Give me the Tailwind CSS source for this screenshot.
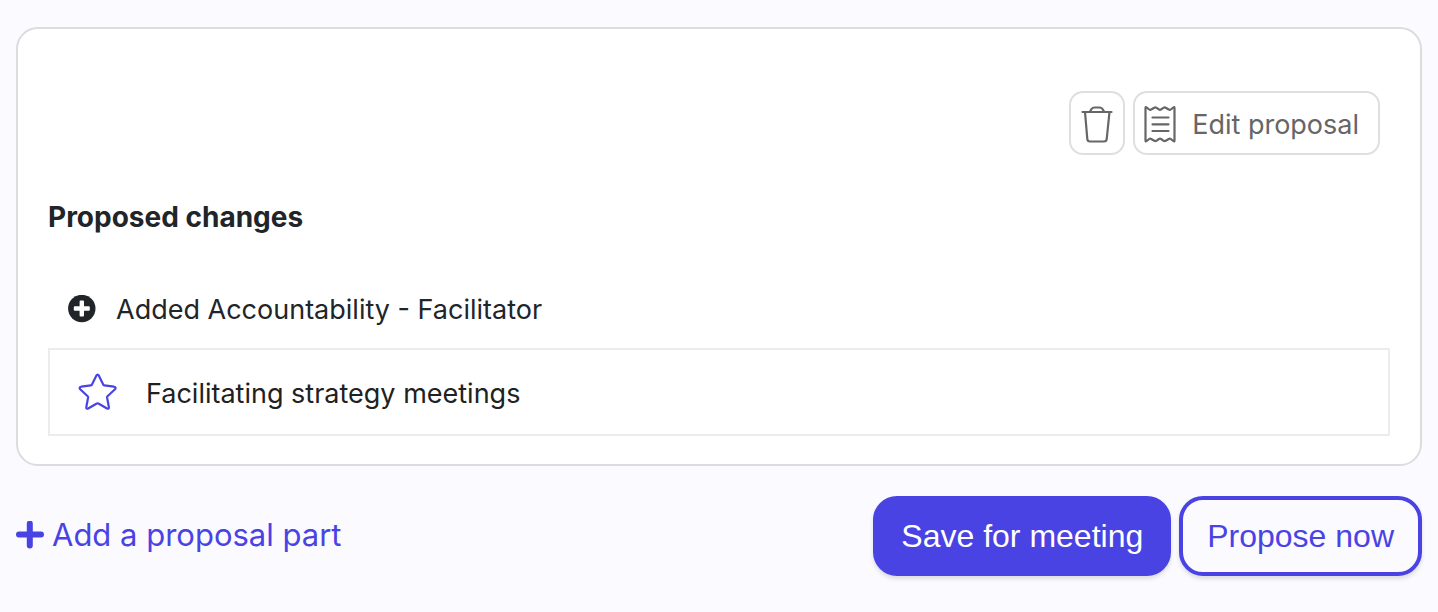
<!DOCTYPE html>
<html lang="en">

<head>
    <meta charset="UTF-8">
    <meta name="viewport" content="width=device-width, initial-scale=1.0">
    <title>Proposal</title>
    <script src="https://cdn.jsdelivr.net/npm/@tailwindcss/browser@4"></script>
</head>

<body class="min-h-screen bg-[#fbfaff] font-['Inter',sans-serif] text-[27px] leading-[40px] text-[#212529]">
    <main class="px-4 pt-[27px]">
        <!-- Proposal card -->
        <section class="rounded-[22px] border-2 border-[#dcdcdc] bg-white px-[30px] pt-[62px] pb-7">
            <div class="flex justify-end gap-2 pr-[10px] text-[#666666]">
                <button type="button" aria-label="Delete proposal"
                    class="flex h-16 w-14 items-center justify-center rounded-[14px] border-2 border-[#dfdfdf]">
                    <svg class="h-10 w-8" viewBox="0 0 32 40" fill="none" stroke="currentColor" stroke-width="2.2"
                        stroke-linecap="round" stroke-linejoin="round">
                        <path d="M1.500 9H30.500" />
                        <path d="M4 9L6.300 36Q6.500 38.500 9 38.500H23Q25.500 38.500 25.700 36L28.500 9" />
                        <path d="M9 8.500L10.500 6Q11.500 4.500 13.500 4.500H18.500Q20.500 4.500 21.500 6L23 8.500" />
                    </svg>
                </button>
                <button type="button"
                    class="flex h-16 items-center gap-4 rounded-[14px] border-2 border-[#dfdfdf] pr-[19px] pl-[9px]">
                    <svg class="h-10 w-8" viewBox="0 0 32 40" fill="none" stroke="currentColor" stroke-width="2.2"
                        stroke-linecap="round" stroke-linejoin="round">
                        <path d="M1.500 5Q1.500 3.500 2.700 4.500L5.200 6.500Q6.200 7.300 7.200 6.500L10.300 4.700Q11.300 4.100 12.300 4.700L15 6.500Q16 7.300 17 6.500L19.700 4.700Q20.700 4.100 21.700 4.700L24.800 6.500Q25.800 7.300 26.800 6.500L29.300 4.500Q30.500 3.500 30.500 5V37.500Q30.500 39 29.300 38L26.800 36Q25.800 35.200 24.800 36L21.700 37.800Q20.700 38.400 19.700 37.800L17 36Q16 35.200 15 36L12.300 37.800Q11.300 38.400 10.300 37.800L7.200 36Q6.200 35.200 5.200 36L2.700 38Q1.500 39 1.500 37.500Z" />
                        <path d="M8.500 14.500H24.500M8.500 21.300H24.500M8.500 28H24.500" />
                    </svg>
                    <span class="pt-1">Edit proposal</span>
                </button>
            </div>

            <h2 class="mt-[42px] text-[28px] font-bold">Proposed changes</h2>

            <div class="mt-[51px] flex items-center gap-5 pl-5">
                <svg class="size-7" viewBox="0 0 28 28">
                    <circle cx="13.800" cy="13.500" r="13.700" fill="currentColor" />
                    <path d="M12.500 5.500H15.100Q16 5.500 16 6.400V11.300H20.900Q21.800 11.300 21.800 12.200V14.800Q21.800 15.700 20.900 15.700H16V20.600Q16 21.500 15.100 21.500H12.500Q11.600 21.500 11.600 20.600V15.700H6.700Q5.800 15.700 5.800 14.800V12.200Q5.800 11.300 6.700 11.300H11.600V6.400Q11.600 5.500 12.500 5.500Z" fill="#fff" />
                </svg>
                <p class="pt-[2px]">Added Accountability - Facilitator</p>
            </div>

            <div class="mt-[18px] flex items-center gap-7 border-2 border-[#ececec] px-7 py-5 text-[#212121]">
                <svg class="size-10 text-[#4a43e4]" viewBox="0 0 40 40" fill="none" stroke="currentColor"
                    stroke-width="2.2" stroke-linejoin="round">
                    <path d="M18.300 3.700Q19.600 1.700 20.900 3.700L25.200 12.500Q25.500 13.200 26.300 13.300L36 14.700Q38.600 15.300 37 17.200L29.500 24.300Q29 24.800 29.100 25.500L30.900 35.200Q31 37.400 29 36.500L20.400 31.500Q19.600 31 18.800 31.500L10.200 36.500Q8.200 37.400 8.300 35.200L10.100 25.500Q10.200 24.800 9.700 24.300L2.200 17.200Q0.600 15.300 3.200 14.700L12.900 13.300Q13.700 13.200 14 12.500Z" />
                </svg>
                <p class="pt-1">Facilitating strategy meetings</p>
            </div>
        </section>

        <!-- Actions -->
        <div class="mt-[30px] flex items-center justify-between text-[32px] text-[#4a43e4]">
            <button type="button" class="flex items-center gap-2 pb-[2px] text-[31px]">
                <svg class="size-7" viewBox="0 0 28 28" fill="none" stroke="currentColor" stroke-width="6"
                    stroke-linecap="round">
                    <path d="M13.800 2.500V24.500M3 13.500H25" />
                </svg>
                <span>Add a proposal part</span>
            </button>
            <div class="flex gap-2 font-['Liberation_Sans',sans-serif]">
                <button type="button"
                    class="h-20 rounded-3xl border-4 border-[#4a43e4] bg-[#4a43e4] px-6 text-white shadow-[0_3px_4px_rgba(0,0,0,0.12)]">Save for meeting</button>
                <button type="button"
                    class="h-20 rounded-3xl border-4 border-[#4a43e4] bg-[#fbfaff] px-6 shadow-[0_3px_4px_rgba(0,0,0,0.12)]">Propose now</button>
            </div>
        </div>
    </main>
</body>

</html>
